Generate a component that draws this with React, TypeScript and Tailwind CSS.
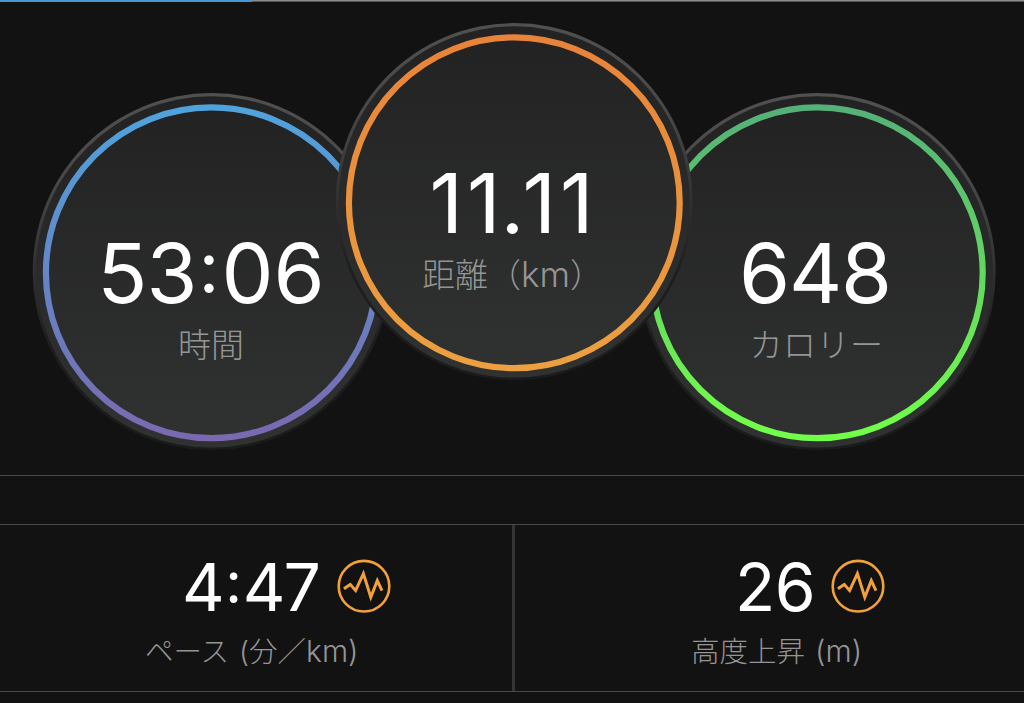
import type { ReactNode } from "react";

type DialProps = {
  id: string;
  value: ReactNode;
  label: ReactNode;
  from: string;
  to: string;
  className: string;
  valueClass?: string;
  labelClass?: string;
};

function Dial({ id, value, label, from, to, className, valueClass = "", labelClass = "" }: DialProps) {
  return (
    <div className={`grid h-[360px] w-[360px] shrink-0 ${className}`}>
      <svg viewBox="0 0 360 360" className="col-start-1 row-start-1 h-[360px] w-[360px]">
        <defs>
          <linearGradient id={`${id}-ring`} x1="0" y1="0" x2="0" y2="1">
            <stop offset="0" stopColor={from} />
            <stop offset="1" stopColor={to} />
          </linearGradient>
          <linearGradient id={`${id}-face`} x1="0" y1="0" x2="0" y2="1">
            <stop offset="0" stopColor="#222222" />
            <stop offset="1" stopColor="#303231" />
          </linearGradient>
          <linearGradient id={`${id}-rim`} x1="0" y1="0" x2="0" y2="1">
            <stop offset="0" stopColor="#505050" />
            <stop offset="0.25" stopColor="#484848" />
            <stop offset="0.5" stopColor="#303030" />
            <stop offset="0.7" stopColor="#1e1e1e" />
            <stop offset="1" stopColor="#1a1b1b" />
          </linearGradient>
        </defs>
        <circle cx="180.2" cy="180.6" r="178.5" fill={`url(#${id}-rim)`} />
        <circle cx="180.2" cy="180.9" r="175.6" fill={`url(#${id}-face)`} />
        <circle cx="180.3" cy="181.8" r="165.4" fill="none" stroke={`url(#${id}-ring)`} strokeWidth="6.2" />
      </svg>
      <div className="z-10 col-start-1 row-start-1 flex flex-col items-center pt-[140px]">
        <div className={`whitespace-nowrap text-[82.5px] leading-[84px] text-white ${valueClass}`}>{value}</div>
        <div className={`mt-[10px] whitespace-nowrap text-[33px] font-light leading-[40px] text-[#959595] ${labelClass}`}>
          {label}
        </div>
      </div>
    </div>
  );
}

function TrendIcon() {
  return (
    <svg viewBox="0 0 54 54" className="h-[54px] w-[54px] shrink-0" fill="none" stroke="#f2a03a">
      <circle cx="27" cy="27.2" r="25.3" strokeWidth="2.6" />
      <path d="M6.9 29.8 L13.3 25.4 L18.6 31.6 L26.4 14.6 L33.8 38.2 L40.3 21.6 L45 31.6" strokeWidth="3" strokeMiterlimit="10" />
    </svg>
  );
}

type StatProps = { value: ReactNode; label: ReactNode; className: string; valueClass: string };

function Stat({ value, label, className, valueClass }: StatProps) {
  return (
    <div className={`flex flex-col pt-[34px] ${className}`}>
      <div className="flex h-[54px] items-center">
        <div className={`whitespace-nowrap pt-px text-[66px] leading-[54px] text-white ${valueClass}`}>{value}</div>
        <TrendIcon />
      </div>
      <div className="mt-[19px] whitespace-nowrap text-[28.5px] font-light leading-[40px] text-[#959595]">{label}</div>
    </div>
  );
}

export default function App() {
  return (
    <main className='h-[703px] w-[1024px] overflow-hidden bg-[#121212] font-["Inter","Noto_Sans_CJK_JP",sans-serif]'>
      <div className="flex h-[2px] border-b border-[#555555] bg-[#8c8c8c]">
        <div className="-mb-px w-[252px] bg-[#4798d2]" />
      </div>
      <section className="flex h-[474px] border-b border-[#4a4a4a] pl-[31px]">
        <Dial
          id="time"
          value={
            <span className="flex">
              <span className="tracking-[-1px]">53</span>
              <span className="w-[25px] -translate-y-[6px] text-center text-[71px]">:</span>
              <span>06</span>
            </span>
          }
          label="時間"
          from="#4fa3dd"
          to="#7a69b0"
          className="mt-[89px]"
        />
        <Dial
          id="distance"
          value={
            <span className="flex">
              <span className="tracking-[4px]">1</span>
              <span>1</span>
              <span className="tracking-[-2px]">.</span>
              <span className="tracking-[4px]">1</span>
              <span>1</span>
            </span>
          }
          label={
            <>
              距離（<span className="text-[35px] leading-none">km</span>）
            </>
          }
          from="#e8833a"
          to="#eca040"
          className="z-10 -ml-[57px] mt-[19px]"
          valueClass="-ml-[5px]"
          labelClass="-ml-[3px]"
        />
        <Dial
          id="calories"
          value="648"
          label="カロリー"
          from="#55b079"
          to="#72ff48"
          className="-ml-[57px] mt-[89px]"
          valueClass="-ml-[4px] tracking-[-1.2px]"
          labelClass="-ml-[1px] tracking-[0.5px]"
        />
      </section>
      <div className="h-[48px]" />
      <section className="flex h-[168px] border-y border-[#4a4a4a]">
        <Stat
          value={
            <span className="flex">
              <span>4</span>
              <span className="w-[18px] -translate-y-[5px] text-center text-[58px]">:</span>
              <span className="tracking-[-1.8px]">47</span>
            </span>
          }
          label={
            <>
              ペース <span className="ml-[2px]">(分／</span>
              <span className="text-[30px] leading-none">km)</span>
            </>
          }
          className="w-[512px] pl-[145px]"
          valueClass="-mr-px ml-[37px] w-[156px]"
        />
        <div className="w-[3px] bg-[#353535]" />
        <Stat
          value="26"
          label={
            <>
              高度上昇 <span className="ml-[2px] text-[30px] leading-none">(m)</span>
            </>
          }
          className="flex-1 pl-[176px]"
          valueClass="ml-[44px] w-[96px] tracking-[-0.5px]"
        />
      </section>
    </main>
  );
}
